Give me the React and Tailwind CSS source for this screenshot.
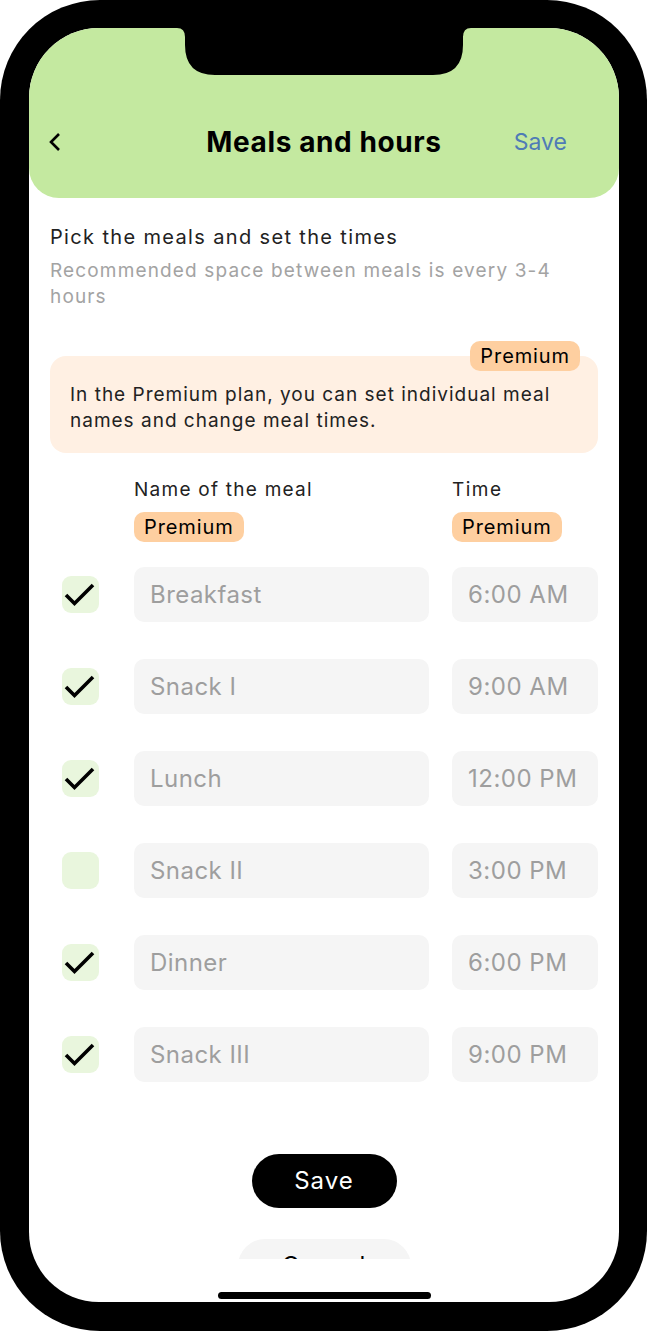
const meals = [
  { name: "Breakfast", time: "6:00 AM", on: true },
  { name: "Snack I", time: "9:00 AM", on: true },
  { name: "Lunch", time: "12:00 PM", on: true },
  { name: "Snack II", time: "3:00 PM", on: false },
  { name: "Dinner", time: "6:00 PM", on: true },
  { name: "Snack III", time: "9:00 PM", on: true },
]

const Badge = ({ className = "" }) => (
  <span className={"inline-flex items-center h-[30px] px-[10px] rounded-[10px] bg-[#fecfa0] text-[20px] tracking-[0.9px] text-black leading-none " + className}>
    Premium
  </span>
)

const Check = ({ on }) => (
  <div className="w-[37px] h-[37px] rounded-[9px] bg-[#e9f6dd] flex items-center justify-center">
    {on && (
      <svg width="37" height="37" viewBox="0 0 37 37" fill="none">
        <path d="M4 19 L12.5 27.5 L31 9" stroke="#000" strokeWidth="3.6" strokeLinecap="butt" strokeLinejoin="miter" />
      </svg>
    )}
  </div>
)

const Row = ({ meal }) => (
  <div className="flex items-center">
    <div className="w-[84px] pl-[12px]">
      <Check on={meal.on} />
    </div>
    <div className="w-[295px] h-[55px] rounded-[10px] bg-[#f5f5f5] flex items-center pl-[16px] text-[24px] tracking-[0.45px] text-[#9e9e9e]">
      {meal.name}
    </div>
    <div className="ml-[23px] flex-1 h-[55px] rounded-[10px] bg-[#f5f5f5] flex items-center pl-[16px] text-[24px] tracking-[0.5px] text-[#9e9e9e]">
      {meal.time}
    </div>
  </div>
)

export default function App() {
  return (
    <div className="w-[647px] h-[1331px] bg-white" style={{ fontFamily: "Inter, 'Noto Sans', sans-serif" }}>
      <div className="relative w-full h-full bg-black rounded-[100px] pl-[29px] pr-[28px] pt-[28px] pb-[29px]">
        <div className="relative h-full bg-white rounded-[70px] overflow-hidden flex flex-col">
          <header className="h-[170px] shrink-0 bg-[#c4e9a0] rounded-b-[30px] pt-[93px] px-[19px]">
            <div className="h-[40px] grid grid-cols-[1fr_auto_1fr] items-center">
              <button className="w-[40px] h-[40px] flex items-center">
                <svg width="14" height="20" viewBox="0 0 14 20" fill="none">
                  <path d="M11 2 L3 10 L11 18" stroke="#000" strokeWidth="2.6" />
                </svg>
              </button>
              <h1 className="text-[28px] font-bold text-black tracking-[0.6px]">Meals and hours</h1>
              <button className="justify-self-end text-[23px] text-[#4f7bb6] pr-[33px]">Save</button>
            </div>
          </header>

          <div className="flex-1 overflow-hidden px-[21px]">
            <p className="mt-[26px] text-[20px] leading-[26px] tracking-[1.35px] text-[#222]">Pick the meals and set the times</p>
            <p className="mt-[8px] text-[19px] leading-[26px] tracking-[1.15px] text-[#a3a3a3]">
              Recommended space between meals is every 3-4 hours
            </p>

            <div className="relative mt-[31px] pt-[15px]">
              <Badge className="absolute top-0 right-[18px]" />
              <div className="rounded-[16px] bg-[#fff0e3] pt-[26px] pb-[19px] px-[20px] text-[19px] leading-[26px] tracking-[1px] text-[#222]">
                In the Premium plan, you can set individual meal names and change meal times.
              </div>
            </div>

            <div className="mt-[25px] flex">
              <div className="w-[84px]" />
              <div className="w-[295px] flex flex-col items-start gap-[10px]">
                <span className="text-[19px] leading-[24px] tracking-[1.25px] text-[#222]">Name of the meal</span>
                <Badge />
              </div>
              <div className="ml-[23px] flex flex-col items-start gap-[10px]">
                <span className="text-[19px] leading-[24px] tracking-[1.5px] text-[#222]">Time</span>
                <Badge />
              </div>
            </div>

            <div className="mt-[25px] flex flex-col gap-[37px]">
              {meals.map((m) => (
                <Row key={m.name} meal={m} />
              ))}
            </div>

            <div className="mt-[72px] flex flex-col items-center gap-[31px]">
              <button className="w-[145px] h-[54px] rounded-full bg-black text-white text-[24px] tracking-[1px]">Save</button>
              <button className="w-[173px] h-[54px] rounded-full bg-[#f5f5f5] text-black text-[24px] tracking-[1px]">Cancel</button>
            </div>
          </div>

          <div className="h-[43px] shrink-0 flex items-end justify-center pb-[3px]">
            <div className="w-[213px] h-[7px] rounded-full bg-black" />
          </div>

          <svg className="absolute top-0 left-[148px]" width="294" height="47" viewBox="0 0 294 47">
            <path d="M0 0 H294 Q286 0 286 9 V17 Q286 47 256 47 H38 Q8 47 8 17 V9 Q8 0 0 0 Z" fill="#000" />
          </svg>
        </div>
      </div>
    </div>
  )
}
